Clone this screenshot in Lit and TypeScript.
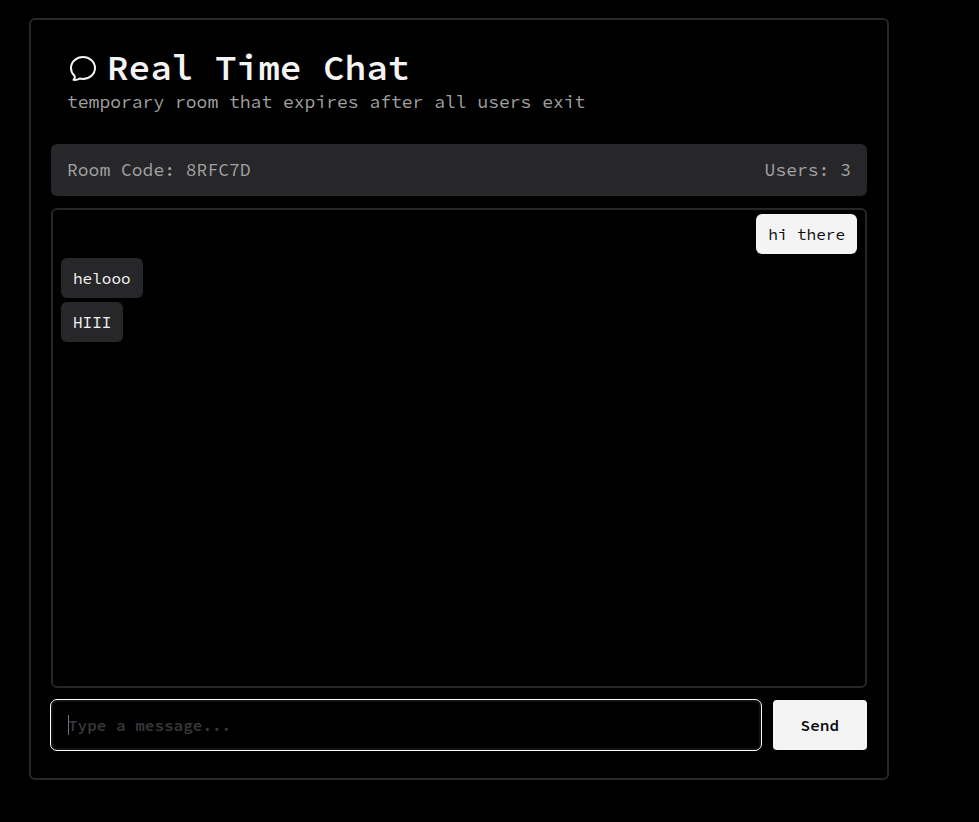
import { LitElement, html, css } from "lit";
import { customElement, property, query, state } from "lit/decorators.js";

interface Message {
  text: string;
  own: boolean;
}

@customElement("app-root")
export class AppRoot extends LitElement {
  static styles = css`
    :host {
      display: block;
      box-sizing: border-box;
      min-height: 100vh;
      padding: 18px 90px 42px 29px;
      background: #000;
      color: #f4f4f5;
      font-family: "Source Code Pro", "Liberation Mono", monospace;
      font-size: 16px;
      line-height: 24px;
    }
    *,
    *::before {
      box-sizing: border-box;
    }
    .card {
      border: 2px solid #27272a;
      border-radius: 6px;
      padding: 24px 20px 28px;
    }
    header {
      padding: 0 16px;
    }
    h1 {
      display: flex;
      align-items: center;
      gap: 8px;
      margin: 0;
      font-size: 36px;
      line-height: 48px;
      font-weight: 600;
    }
    .logo {
      width: 32px;
      height: 32px;
      flex: none;
    }
    .subtitle {
      margin: 0;
      font-size: 18px;
      line-height: 20px;
      color: #a1a1a1;
    }
    .info {
      display: flex;
      justify-content: space-between;
      margin-top: 32px;
      padding: 12px 16px;
      border-radius: 6px;
      background: #27272a;
      color: #a1a1a1;
      font-size: 18px;
      line-height: 28px;
    }
    .messages {
      display: flex;
      flex-direction: column;
      align-items: flex-start;
      gap: 4px;
      height: 480px;
      margin: 12px 0 0;
      padding: 4px 8px;
      overflow-y: auto;
      list-style: none;
      border: 2px solid #27272a;
      border-radius: 6px;
    }
    .message {
      max-width: 80%;
      padding: 8px 12px;
      border-radius: 6px;
      background: #27272a;
    }
    .own {
      align-self: flex-end;
      background: #f4f4f4;
      color: #09090b;
    }
    form {
      display: flex;
      gap: 12px;
      margin-top: 12px;
    }
    .field {
      position: relative;
      display: flex;
      flex: 1;
      min-width: 0;
    }
    input,
    button {
      height: 50px;
      margin: 0;
      font: inherit;
      font-weight: 600;
    }
    input {
      flex: 1;
      min-width: 0;
      padding: 0 15px;
      border: 2px solid #121214;
      border-radius: 6px;
      background: #000;
      color: #f4f4f5;
      caret-color: #71717a;
    }
    input:focus {
      outline: 1px solid #fff;
    }
    input:placeholder-shown {
      caret-color: transparent;
    }
    input::placeholder {
      color: #38383e;
      opacity: 1;
    }
    .caret {
      display: none;
      position: absolute;
      left: 17px;
      top: 15px;
      width: 1px;
      height: 20px;
      background: #71717a;
      pointer-events: none;
    }
    input:placeholder-shown:focus + .caret {
      display: block;
    }
    button {
      padding: 0 28px;
      border: 0;
      border-radius: 4px;
      background: #f4f4f4;
      color: #09090b;
      cursor: pointer;
    }
  `;

  @property() code = "8RFC7D";
  @property({ type: Number }) users = 3;
  @state() private messages: Message[] = [
    { text: "hi there", own: true },
    { text: "helooo", own: false },
    { text: "HIII", own: false },
  ];
  @query("input") private field!: HTMLInputElement;

  firstUpdated() {
    this.field.focus();
  }

  private send(event: Event) {
    event.preventDefault();
    const text = this.field.value.trim();
    if (!text) return;
    this.messages = [...this.messages, { text, own: true }];
    this.field.value = "";
  }

  render() {
    return html`
      <main class="card">
        <header>
          <h1>
            <svg class="logo" viewBox="0 0 24 24" fill="none" stroke="currentColor" stroke-width="1.5" stroke-linecap="round" stroke-linejoin="round" aria-hidden="true">
              <path d="M12 20.25c4.97 0 9-3.694 9-8.25s-4.03-8.25-9-8.25S3 7.444 3 12c0 2.104.859 4.023 2.273 5.48.432.447.74 1.04.586 1.641a4.483 4.483 0 0 1-.923 1.785A5.969 5.969 0 0 0 6 21c1.282 0 2.47-.402 3.445-1.087.81.22 1.668.337 2.555.337Z" />
            </svg>
            Real Time Chat
          </h1>
          <p class="subtitle">temporary room that expires after all users exit</p>
        </header>
        <div class="info">
          <span>Room Code: ${this.code}</span>
          <span>Users: ${this.users}</span>
        </div>
        <ul class="messages">
          ${this.messages.map((m) => html`<li class="message ${m.own ? "own" : ""}">${m.text}</li>`)}
        </ul>
        <form @submit=${this.send}>
          <div class="field">
            <input type="text" aria-label="Message" placeholder="Type a message..." autocomplete="off" />
            <span class="caret"></span>
          </div>
          <button type="submit">Send</button>
        </form>
      </main>
    `;
  }
}
